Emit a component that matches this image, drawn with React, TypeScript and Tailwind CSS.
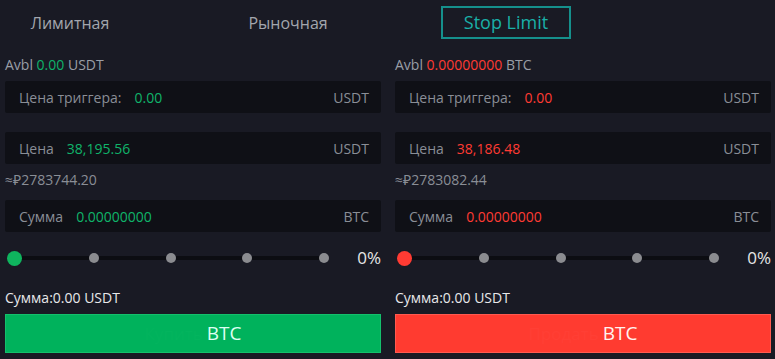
import React from "react";

const font = { fontFamily: '"Open Sans", "Noto Sans", sans-serif' };

function Field({ label, value, unit, color }: { label: string; value: string; unit: string; color: string }) {
  return (
    <div className="flex h-[32px] items-center rounded-[2px] bg-[#0f1016] pl-[14px] pr-[12px] text-[14px]">
      <span className="text-[#8a8e96]">{label}</span>
      <span className={`ml-[13px] ${color}`}>{value}</span>
      <span className="ml-auto text-[#8a8e96]">{unit}</span>
    </div>
  );
}

function Slider({ dot }: { dot: string }) {
  return (
    <div className="mt-[16px] flex h-[20px] items-center">
      <div className="relative ml-[2px] flex h-[20px] w-[322px] items-center justify-between">
        <div className="absolute left-[6px] right-[4px] top-[8px] h-[4px] bg-[#0c0d12]" />
        <div className={`relative h-[15px] w-[15px] rounded-full ${dot}`} />
        <div className="relative h-[10px] w-[10px] rounded-full bg-[#8b8c90]" />
        <div className="relative h-[10px] w-[10px] rounded-full bg-[#8b8c90]" />
        <div className="relative h-[10px] w-[10px] rounded-full bg-[#8b8c90]" />
        <div className="relative h-[10px] w-[10px] rounded-full bg-[#8b8c90]" />
      </div>
      <span className="ml-auto text-[17px] leading-[20px] text-[#e6e6e6]">0%</span>
    </div>
  );
}

function Column({
  avblValue,
  avblUnit,
  trigger,
  price,
  approx,
  amount,
  color,
  dot,
  btn,
  btnText,
  hidden,
  hiddenColor,
}: {
  avblValue: string;
  avblUnit: string;
  trigger: string;
  price: string;
  approx: string;
  amount: string;
  color: string;
  dot: string;
  btn: string;
  btnText: string;
  hidden: string;
  hiddenColor: string;
}) {
  return (
    <div className="flex flex-col">
      <div className="mt-[10px] h-[20px] text-[14px] leading-[20px] text-[#9a9ea6]">
        Avbl <span className={color}>{avblValue}</span> {avblUnit}
      </div>
      <div className="mt-[6px]">
        <Field label="Цена триггера:" value={trigger} unit="USDT" color={color} />
      </div>
      <div className="mt-[19px]">
        <Field label="Цена" value={price} unit="USDT" color={color} />
      </div>
      <div className="mt-[6px] h-[20px] text-[14px] leading-[20px] text-[#8a8e96]">{approx}</div>
      <div className="mt-[10px]">
        <Field label="Сумма" value={amount} unit="BTC" color={color} />
      </div>
      <Slider dot={dot} />
      <div className="mt-[20px] h-[20px] text-[14px] leading-[20px] text-[#e8e8ea]">Сумма:0.00 USDT</div>
      <div className={`mt-[6px] flex h-[39px] items-center justify-center text-[19px] ${btn}`}>
        <span className={`text-[17px] ${hiddenColor}`}>{hidden}</span>
        <span className={`ml-[4px] ${btnText}`}>BTC</span>
      </div>
    </div>
  );
}

export default function App() {
  return (
    <div className="h-[359px] w-[775px] overflow-hidden bg-[#191a24]" style={font}>
      <div className="flex h-[45px] gap-[88px] pl-[5px] pt-[6px]">
        <div className="flex h-[33px] w-[130px] items-center justify-center text-[16px] text-[#a3a6ad]">Лимитная</div>
        <div className="flex h-[33px] w-[130px] items-center justify-center text-[16px] text-[#a3a6ad]">Рыночная</div>
        <div className="flex h-[33px] w-[130px] items-center justify-center border-2 border-[#15908c] text-[18px] font-medium text-[#1ab0a8]">
          Stop Limit
        </div>
      </div>
      <div className="grid grid-cols-2 gap-[14px] pl-[5px] pr-[4px]">
        <Column
          avblValue="0.00"
          avblUnit="USDT"
          trigger="0.00"
          price="38,195.56"
          approx="≈₽2783744.20"
          amount="0.00000000"
          color="text-[#0fb46a]"
          dot="bg-[#0fb45e]"
          btn="bg-[#00b25c] border border-[#14c06c]"
          btnText="text-[#dcfff2]"
          hidden="Купить"
          hiddenColor="text-[#03b45e]"
        />
        <Column
          avblValue="0.00000000"
          avblUnit="BTC"
          trigger="0.00"
          price="38,186.48"
          approx="≈₽2783082.44"
          amount="0.00000000"
          color="text-[#ff3b33]"
          dot="bg-[#ff3b33]"
          btn="bg-[#ff3b30] border border-[#ff5a50]"
          btnText="text-[#fff3f0]"
          hidden="Продать"
          hiddenColor="text-[#ff3f35]"
        />
      </div>
    </div>
  );
}
